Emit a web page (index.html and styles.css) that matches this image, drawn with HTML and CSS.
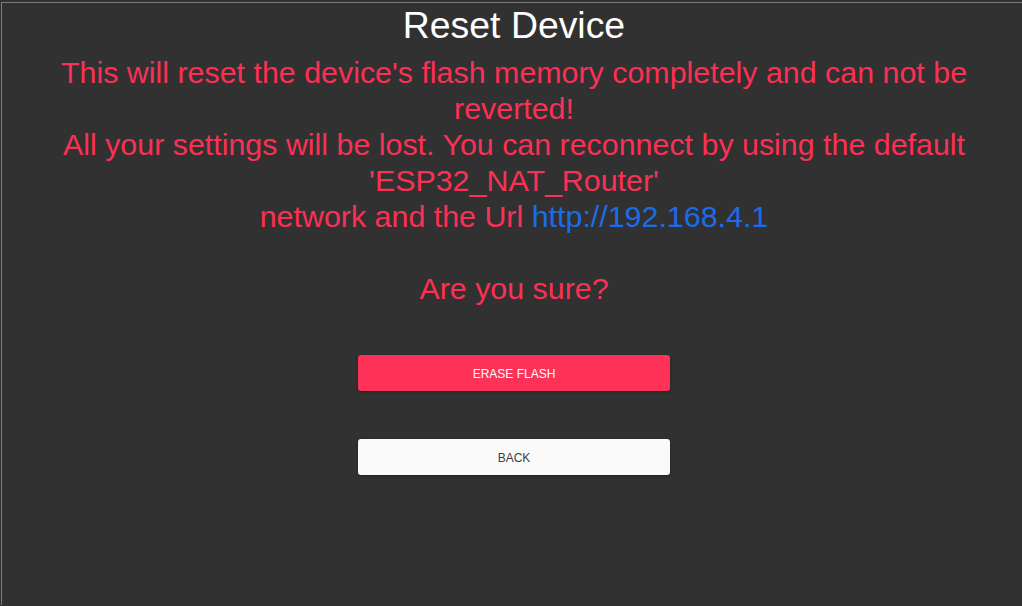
FILE: index.html
```html
<!DOCTYPE html>
<html>
<head>
<meta charset="utf-8">
<link rel="stylesheet" href="styles.css">
</head>
<body>
<div class="frame">
  <h1 class="title">Reset Device</h1>
  <p class="warning">This will reset the device's flash memory completely and can not be reverted!<br>All your settings will be lost. You can reconnect by using the default 'ESP32_NAT_Router'<br>network and the Url <a class="link" href="#">http://192.168.4.1</a><br><br>Are you sure?</p>
  <div class="actions">
    <button class="btn btn-danger">ERASE FLASH</button>
    <button class="btn btn-light">BACK</button>
  </div>
</div>
</body>
</html>
```
FILE: styles.css
```css
html, body {
  margin: 0;
  padding: 0;
  background: #313131;
  height: 100%;
  overflow: hidden;
}
body {
  font-family: "Liberation Sans", Arial, sans-serif;
}
.frame {
  margin: 2px 0 0 1px;
  width: 1025px;
  height: 603px;
  border-top: 1px solid #7b7b7b;
  border-left: 1px solid #7b7b7b;
  box-sizing: border-box;
  display: flex;
  flex-direction: column;
  align-items: center;
  overflow: hidden;
}
.title {
  margin: 1px 0 0;
  font-size: 37.4px;
  font-weight: normal;
  line-height: 42px;
  color: #ffffff;
}
.warning {
  margin: 8px 0 0;
  width: 940px;
  font-size: 30.4px;
  line-height: 36px;
  color: #fb3054;
  text-align: center;
}
.link {
  color: #1b6cea;
  text-decoration: none;
}
.actions {
  margin-top: 49px;
  display: flex;
  flex-direction: column;
  align-items: center;
  gap: 48px;
}
.btn {
  width: 312px;
  height: 36px;
  padding: 1px 0 0;
  border: none;
  border-radius: 3px;
  font-family: "Liberation Sans", Arial, sans-serif;
  font-size: 12px;
  box-shadow: 0 1px 3px rgba(0,0,0,0.35);
}
.btn-danger {
  background: #fe3158;
  color: #ffffff;
}
.btn-light {
  background: #fafafa;
  color: #3d3d3d;
}
```
